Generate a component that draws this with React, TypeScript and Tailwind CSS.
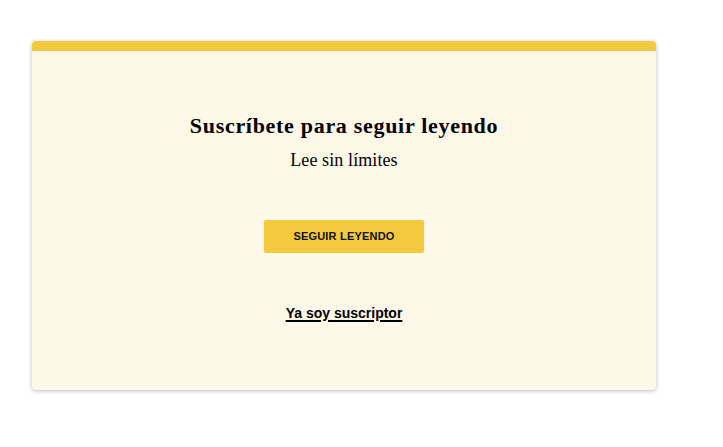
export default function App() {
  return (
    <div className="w-[723px] h-[447px] bg-white pt-[41px] pl-[32px]">
      <div className="w-[624px] h-[349px] rounded-[4px] overflow-hidden bg-[#fef8e9] shadow-[0_1px_4px_rgba(0,0,0,0.25)] flex flex-col">
        <div className="h-[10px] bg-[#f3c93e]" />
        <div className="flex flex-col items-center pt-[62px]">
          <h1 className="text-[22px] leading-[26px] font-bold text-black tracking-[0.7px]" style={{ fontFamily: '"Liberation Serif", serif' }}>
            Suscríbete para seguir leyendo
          </h1>
          <p className="mt-[10px] text-[18px] leading-[22px] text-black tracking-[0.1px]" style={{ fontFamily: '"Liberation Serif", serif' }}>
            Lee sin límites
          </p>
          <button className="mt-[49px] w-[160px] h-[33px] rounded-[2px] bg-[#f3c93e] text-[11px] font-bold text-[#111] tracking-[0.2px]" style={{ fontFamily: '"Liberation Sans", sans-serif' }}>
            SEGUIR LEYENDO
          </button>
          <a className="mt-[50px] text-[14px] font-bold text-black underline decoration-2 underline-offset-2" style={{ fontFamily: '"Liberation Sans", sans-serif' }}>
            Ya soy suscriptor
          </a>
        </div>
      </div>
    </div>
  );
}
